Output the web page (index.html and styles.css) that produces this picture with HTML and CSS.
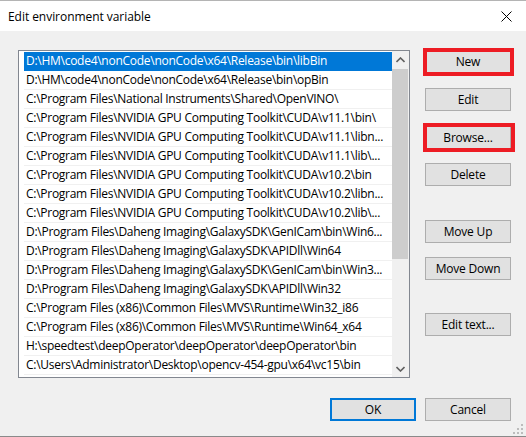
FILE: index.html
```html
<!DOCTYPE html>
<html>
<head>
<meta charset="utf-8">
<link rel="stylesheet" href="styles.css">
</head>
<body>
<div class="window">
  <div class="titlebar">
    <span class="title">Edit environment variable</span>
    <svg class="close" width="11" height="11" viewBox="0 0 11 11"><path d="M0.5 0.5 L10.5 10.5 M10.5 0.5 L0.5 10.5" stroke="#000" stroke-width="1" fill="none"/></svg>
  </div>
  <div class="content">
    <div class="main">
      <div class="listbox">
        <div class="rows">
          <div class="row selected">D:\HM\code4\nonCode\nonCode\x64\Release\bin\libBin</div>
          <div class="row">D:\HM\code4\nonCode\nonCode\x64\Release\bin\opBin</div>
          <div class="row">C:\Program Files\National Instruments\Shared\OpenVINO\</div>
          <div class="row">C:\Program Files\NVIDIA GPU Computing Toolkit\CUDA\v11.1\bin\</div>
          <div class="row">C:\Program Files\NVIDIA GPU Computing Toolkit\CUDA\v11.1\libn...</div>
          <div class="row">C:\Program Files\NVIDIA GPU Computing Toolkit\CUDA\v11.1\lib\...</div>
          <div class="row">C:\Program Files\NVIDIA GPU Computing Toolkit\CUDA\v10.2\bin</div>
          <div class="row">C:\Program Files\NVIDIA GPU Computing Toolkit\CUDA\v10.2\libn...</div>
          <div class="row">C:\Program Files\NVIDIA GPU Computing Toolkit\CUDA\v10.2\lib\...</div>
          <div class="row">D:\Program Files\Daheng Imaging\GalaxySDK\GenICam\bin\Win6...</div>
          <div class="row">D:\Program Files\Daheng Imaging\GalaxySDK\APIDll\Win64</div>
          <div class="row">D:\Program Files\Daheng Imaging\GalaxySDK\GenICam\bin\Win3...</div>
          <div class="row">D:\Program Files\Daheng Imaging\GalaxySDK\APIDll\Win32</div>
          <div class="row">C:\Program Files (x86)\Common Files\MVS\Runtime\Win32_i86</div>
          <div class="row">C:\Program Files (x86)\Common Files\MVS\Runtime\Win64_x64</div>
          <div class="row">H:\speedtest\deepOperator\deepOperator\deepOperator\bin</div>
          <div class="row">C:\Users\Administrator\Desktop\opencv-454-gpu\x64\vc15\bin</div>
        </div>
        <div class="scrollbar">
          <div class="arrow">
            <svg width="9" height="6" viewBox="0 0 9 6"><path d="M0.5 5 L4.5 1 L8.5 5" stroke="#606060" stroke-width="1.6" fill="none"/></svg>
          </div>
          <div class="track"><div class="thumb"></div></div>
          <div class="arrow">
            <svg width="9" height="6" viewBox="0 0 9 6"><path d="M0.5 1 L4.5 5 L8.5 1" stroke="#606060" stroke-width="1.6" fill="none"/></svg>
          </div>
        </div>
      </div>
      <div class="buttons">
        <div class="btn marked mark-new">New</div>
        <div class="btn g15">Edit</div>
        <div class="btn g15 marked mark-browse">Browse...</div>
        <div class="btn g14">Delete</div>
        <div class="btn g34">Move Up</div>
        <div class="btn g14">Move Down</div>
        <div class="btn g33">Edit text...</div>
      </div>
    </div>
    <div class="footer">
      <div class="btn default">OK</div>
      <div class="btn">Cancel</div>
    </div>
    <svg class="grip" width="10" height="10" viewBox="0 0 10 10">
      <rect x="8" y="0" width="2" height="2" fill="#bcbcbc"/>
      <rect x="4" y="4" width="2" height="2" fill="#bcbcbc"/>
      <rect x="8" y="4" width="2" height="2" fill="#bcbcbc"/>
      <rect x="0" y="8" width="2" height="2" fill="#bcbcbc"/>
      <rect x="4" y="8" width="2" height="2" fill="#bcbcbc"/>
      <rect x="8" y="8" width="2" height="2" fill="#bcbcbc"/>
    </svg>
  </div>
</div>
</body>
</html>
```
FILE: styles.css
```css
html, body {
  margin: 0;
  padding: 0;
  background: #f0f0f0;
}
.window {
  width: 526px;
  height: 437px;
  box-sizing: border-box;
  display: flex;
  flex-direction: column;
  font-family: "Open Sans", "Noto Sans", sans-serif;
  font-size: 12px;
  color: #000;
  border-top: 1px solid #b4b4b4;
  border-bottom: 1px solid #8a8a8a;
}
.titlebar {
  height: 30px;
  background: #fff;
  display: flex;
  align-items: center;
  justify-content: space-between;
  padding: 0 14px 0 8px;
  flex: none;
}
.title {
  font-size: 12px;
  letter-spacing: -0.05px;
}
.close {
  display: block;
}
.content {
  flex: 1;
  position: relative;
  background: #f0f0f0;
  padding: 19px 15px 0 18px;
}
.main {
  display: flex;
  gap: 15px;
}
.listbox {
  width: 392px;
  height: 328px;
  box-sizing: border-box;
  border: 1px solid #828790;
  background: #fff;
  display: flex;
  padding: 1px 0 1px 5px;
}
.rows {
  flex: 1;
  display: flex;
  flex-direction: column;
  min-width: 0;
}
.row {
  height: 19px;
  box-sizing: border-box;
  border-bottom: 1px solid #f0f0f0;
  padding-left: 2px;
  line-height: 18px;
  white-space: nowrap;
  overflow: hidden;
  font-size: 12px;
  letter-spacing: -0.27px;
}
.row.selected {
  background: #0078d7;
  color: #fff;
  border-bottom-color: #0078d7;
}
.scrollbar {
  width: 17px;
  margin-top: -1px;
  margin-bottom: -1px;
  background: #f0f0f0;
  display: flex;
  flex-direction: column;
}
.arrow {
  height: 17px;
  display: flex;
  align-items: center;
  justify-content: center;
  flex: none;
}
.track {
  flex: 1;
}
.thumb {
  margin-top: 1px;
  width: 16px;
  height: 190px;
  background: #cdcdcd;
}
.buttons {
  display: flex;
  flex-direction: column;
}
.btn {
  position: relative;
  width: 86px;
  height: 23px;
  box-sizing: border-box;
  border: 1px solid #adadad;
  background: #e1e1e1;
  display: flex;
  align-items: center;
  justify-content: center;
  font-size: 12px;
  letter-spacing: -0.2px;
}
.g14 { margin-top: 14px; }
.g15 { margin-top: 15px; }
.g33 { margin-top: 33px; }
.g34 { margin-top: 34px; }
.marked::after {
  content: "";
  position: absolute;
  border: 4px solid #ed1c24;
}
.mark-new::after {
  left: -3px;
  right: -4px;
  top: -3px;
  bottom: -4px;
}
.mark-browse::after {
  left: -3px;
  right: -5px;
  top: -4px;
  bottom: -4px;
}
.footer {
  display: flex;
  justify-content: flex-end;
  gap: 9px;
  margin-top: 20px;
}
.btn.default {
  border: 2px solid #0078d7;
}
.grip {
  position: absolute;
  right: 3px;
  bottom: 2px;
}
```
